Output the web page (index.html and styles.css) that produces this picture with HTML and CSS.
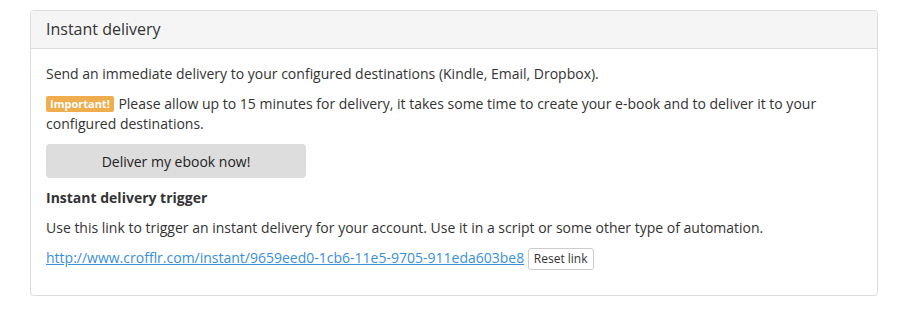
FILE: index.html
```html
<!DOCTYPE html>
<html lang="en">

<head>
    <meta charset="UTF-8">
    <meta name="viewport" content="width=device-width, initial-scale=1.0">
    <title>Instant delivery</title>
    <link rel="stylesheet" href="styles.css">
</head>

<body>
    <div class="panel">
        <div class="panel-heading">
            <h3 class="panel-title">Instant delivery</h3>
        </div>
        <div class="panel-body">
            <p>Send an immediate delivery to your configured destinations (Kindle, Email, Dropbox).</p>
            <p><span class="label">Important!</span> Please allow up to 15 minutes for delivery, it takes some time to create your e-book and to deliver it to your configured destinations.</p>
            <button class="btn-deliver">Deliver my ebook now!</button>

            <h4>Instant delivery trigger</h4>
            <p>Use this link to trigger an instant delivery for your account. Use it in a script or some other type of automation.</p>
            <p class="trigger-row">
                <a href="#">http://www.crofflr.com/instant/9659eed0-1cb6-11e5-9705-911eda603be8</a>
                <button class="btn-small">Reset link</button>
            </p>
        </div>
    </div>
</body>

</html>
```

FILE: styles.css
```css
* {
    margin: 0;
    padding: 0;
    box-sizing: border-box;
}

body {
    font-family: 'Open Sans', 'Liberation Sans', sans-serif;
    font-size: 14px;
    line-height: 20px;
    color: #333;
    background-color: #fff;
    padding: 10px 41px 0 30px;
}

/* Panel */
.panel {
    border: 1px solid #ddd;
    border-radius: 4px;
    box-shadow: 0 1px 1px rgba(0, 0, 0, 0.05);
}

.panel-heading {
    background-color: #f5f5f5;
    border-bottom: 1px solid #ddd;
    border-radius: 3px 3px 0 0;
    padding: 8px 15px 9px;
}

.panel-title {
    font-size: 16px;
    font-weight: normal;
    line-height: 20px;
}

.panel-body {
    padding: 15px 15px 15px;
}

.panel-body p {
    margin-bottom: 10px;
}

.label {
    display: inline-block;
    background-color: #f0ad4e;
    color: #fff;
    font-size: 11px;
    font-weight: bold;
    line-height: 1;
    padding: 2px 4px 3px;
    margin-right: 1px;
    border-radius: 2px;
    vertical-align: 1px;
}

.btn-deliver {
    display: block;
    width: 260px;
    height: 34px;
    background-color: #ddd;
    border: none;
    border-radius: 4px;
    font-family: inherit;
    font-size: 14px;
    color: #222;
    cursor: pointer;
    margin-bottom: 10px;
}

h4 {
    font-size: 14px;
    font-weight: bold;
    line-height: 20px;
    margin-bottom: 10px;
}

.trigger-row a {
    color: #3a8fd9;
    text-decoration: underline;
}

.btn-small {
    font-family: inherit;
    font-size: 12px;
    line-height: 16px;
    color: #333;
    background-color: #fff;
    border: 1px solid #ccc;
    border-radius: 3px;
    padding: 2px 5px 2px;
    cursor: pointer;
}
```
